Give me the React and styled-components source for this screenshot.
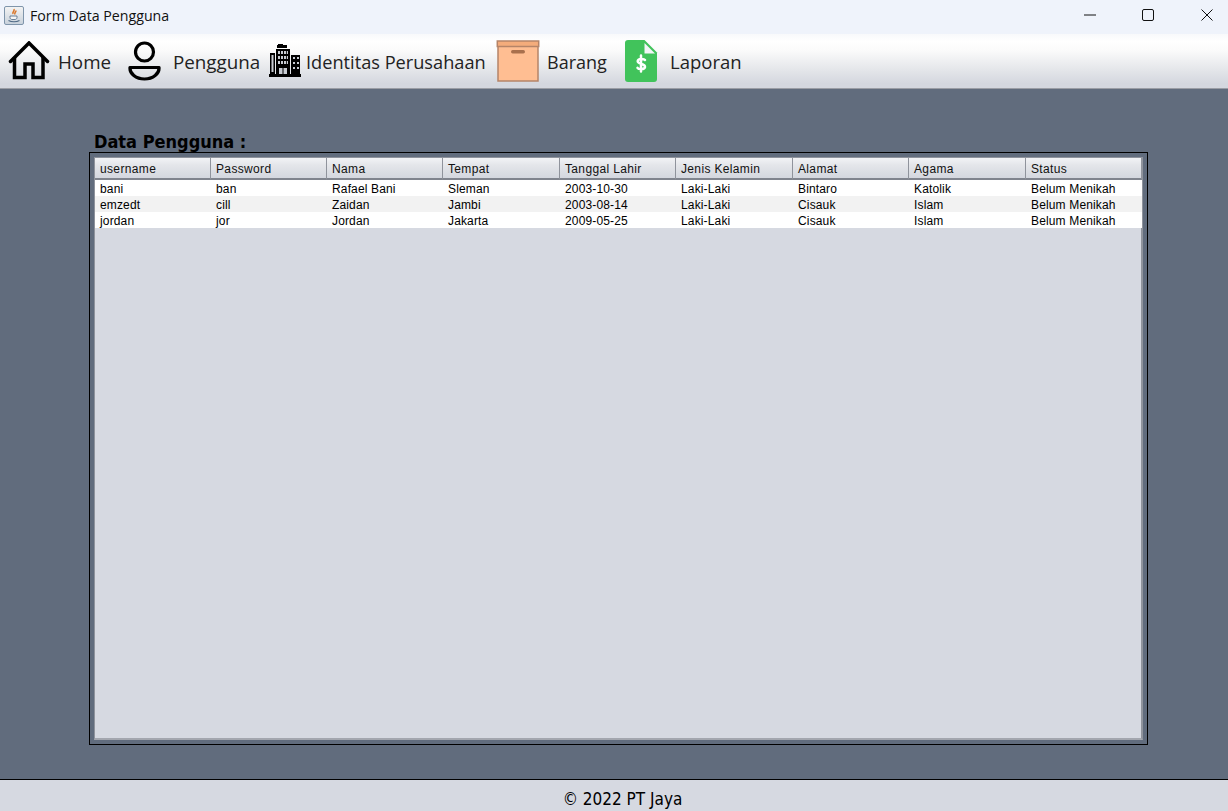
import React from 'react';
import styled, { createGlobalStyle } from 'styled-components';

const GlobalStyle = createGlobalStyle`
  html, body {
    margin: 0;
    padding: 0;
    height: 100%;
    overflow: hidden;
  }
  #root {
    height: 100%;
  }
`;

/*
 * styled components
 */

const Window = styled.div`
  display: flex;
  flex-direction: column;
  height: 811px;
  overflow: hidden;
  width: 1228px;
  background: #616c7d;
`;

const TitleBar = styled.div`
  align-items: center;
  background: #eff3fb;
  display: flex;
  flex: 0 0 34px;
  padding-left: 4px;
`;

const AppIcon = styled.div`
  align-items: center;
  background: linear-gradient(#f3f3f3, #c9d2dc);
  border: 1px solid #7f95ab;
  border-radius: 2px;
  box-sizing: border-box;
  display: flex;
  height: 19px;
  justify-content: center;
  margin-top: -4px;
  width: 20px;
`;

const WindowTitle = styled.span`
  color: #111;
  font-family: "Open Sans", "Noto Sans", sans-serif;
  font-size: 14.2px;
  margin-left: 6px;
  margin-top: -3px;
`;

const WindowButtons = styled.div`
  align-self: flex-start;
  display: flex;
  margin-left: auto;
  margin-right: -8px;
`;

const WindowButton = styled.div`
  align-items: center;
  display: flex;
  height: 30px;
  justify-content: center;
  width: 58.500px;
`;

const Toolbar = styled.div`
  align-items: center;
  background: linear-gradient(#f8f9fb 0, #ffffff 14%, #fbfbfb 30%, #e3e5e9 68%, #d4d7df 92%);
  border-bottom: 1px solid #9a9da5;
  box-sizing: border-box;
  display: flex;
  flex: 0 0 55px;
  height: 55px;
  padding-left: 8px;
`;

const ToolItem = styled.div`
  align-items: center;
  display: flex;
  flex: 0 0 ${props => props.$width}px;
`;

const ToolLabel = styled.span`
  color: #222;
  font-family: "Open Sans", "Noto Sans", sans-serif;
  font-size: ${props => props.$size}px;
  line-height: 26px;
  margin-left: ${props => props.$gap}px;
  margin-top: 2px;
  white-space: nowrap;
`;

const Content = styled.div`
  display: flex;
  flex: 1 1 auto;
  flex-direction: column;
  min-height: 0;
  padding: 41px 80px 0 89px;
`;

const Heading = styled.h2`
  color: #000;
  font-family: "DejaVu Sans Condensed", "DejaVu Sans", sans-serif;
  font-size: 18px;
  font-weight: bold;
  height: 22px;
  line-height: 23px;
  margin: 0 0 0 5px;
`;

const ScrollFrame = styled.div`
  border: 1px solid #000;
  box-sizing: border-box;
  height: 593px;
  padding: 4px;
  width: 1059px;
`;

const ScrollInner = styled.div`
  background: #d6d9e1;
  border-bottom: 2px solid #a3a6ae;
  border-left: 1px solid #8f939c;
  border-right: 2px solid #8f939c;
  border-top: 1px solid #8f939c;
  box-sizing: border-box;
  height: 100%;
`;

const Grid = styled.div`
  display: grid;
  grid-template-columns: 116px 116px 116px 117px 116px 117px 116px 117px 116px;
`;

const HeaderCell = styled.div`
  background: linear-gradient(#f2f3f6 0, #e4e6ea 35%, #d4d7df 100%);
  border-bottom: 2px solid #80848e;
  border-right: 1px solid #8f939c;
  box-sizing: border-box;
  color: #111;
  font-family: "Liberation Sans", Arial, sans-serif;
  font-size: 12px;
  height: 22px;
  letter-spacing: 0.350px;
  line-height: 22px;
  padding-left: 5px;
`;

const Cell = styled.div`
  background: ${props => (props.$odd ? '#f2f2f2' : '#ffffff')};
  color: #000;
  font-family: "Liberation Sans", Arial, sans-serif;
  font-size: 12px;
  height: 16px;
  letter-spacing: 0.150px;
  line-height: 19px;
  padding-left: 5px;
  white-space: nowrap;
`;

const Footer = styled.footer`
  background: #d6d9e1;
  border-top: 1px solid #000;
  box-sizing: border-box;
  color: #000;
  flex: 0 0 32px;
  font-family: "DejaVu Sans Condensed", "DejaVu Sans", sans-serif;
  font-size: 17px;
  height: 32px;
  line-height: 38px;
  min-height: 0;
  overflow: hidden;
  padding-left: 17px;
  text-align: center;
`;

const COLUMNS = ['username', 'Password', 'Nama', 'Tempat', 'Tanggal Lahir', 'Jenis Kelamin', 'Alamat', 'Agama', 'Status'];

const ROWS = [
  ['bani', 'ban', 'Rafael Bani', 'Sleman', '2003-10-30', 'Laki-Laki', 'Bintaro', 'Katolik', 'Belum Menikah'],
  ['emzedt', 'cill', 'Zaidan', 'Jambi', '2003-08-14', 'Laki-Laki', 'Cisauk', 'Islam', 'Belum Menikah'],
  ['jordan', 'jor', 'Jordan', 'Jakarta', '2009-05-25', 'Laki-Laki', 'Cisauk', 'Islam', 'Belum Menikah'],
];

const JavaIcon = () => (
  <svg width="14" height="15" viewBox="0 0 14 15" fill="none">
    <path d="M7 1c1 2-2 3-1 5M9 2.500c0 2-2 2-1 4" stroke="#d9772b" strokeWidth="1.500" />
    <path d="M3 8h7v1.500c0 1.200-1 2-2 2H5c-1 0-2-.8-2-2z" fill="#f5f5f5" stroke="#5d7690" strokeWidth="0.900" />
    <path d="M1.500 12.500c3 1.500 8 1.500 11 0" stroke="#4f6a86" strokeWidth="1.200" />
  </svg>
);

const HomeIcon = () => (
  <svg width="42" height="40" viewBox="0 0 42 40" fill="none" stroke="#000" strokeWidth="3.500">
    <path d="M2.500 20.500 21 2 39.500 20.500" strokeLinecap="round" strokeLinejoin="miter" />
    <path d="M6.500 16v20.500h10.500V23h8v13.500h10V16" strokeLinejoin="miter" />
  </svg>
);

const UserIcon = () => (
  <svg width="34" height="40" viewBox="0 0 34 40" fill="none" stroke="#000" strokeWidth="3.200">
    <circle cx="17.500" cy="11" r="9" />
    <path d="M3 26.500h29c.6 6-6 11.500-14.500 11.500S2.400 32.500 3 26.500z" strokeLinejoin="round" />
  </svg>
);

const BuildingIcon = () => (
  <svg width="32" height="34" viewBox="0 0 32 34">
    <path fill="#000" d="M9 0h5v1h4v3H8V1h1zM7 5h14v25H7zM1 9h5v21H1zM22 11h9v19h-9zM0 30h32v3H0z" />
    <g fill="#c9ccd3">
      <rect x="2.500" y="11" width="2" height="17" />
      <rect x="9" y="7" width="10" height="3" />
      <rect x="9" y="12" width="10" height="3" />
      <rect x="9" y="17" width="10" height="3" />
      <rect x="10" y="24" width="8" height="6" />
      <rect x="24" y="13" width="2" height="2" />
      <rect x="28" y="13" width="2" height="2" />
      <rect x="24" y="18" width="2" height="2" />
      <rect x="28" y="18" width="2" height="2" />
      <rect x="24" y="23" width="2" height="2" />
      <rect x="28" y="23" width="2" height="2" />
    </g>
    <path fill="#000" d="M11 7h1v13h-1zM14 7h1v13h-1zM17 7h.800v13H17zM13.500 24h1v6h-1z" />
  </svg>
);

const BoxIcon = () => (
  <svg width="44" height="42" viewBox="0 0 44 42">
    <rect x="2" y="5" width="40" height="36" fill="#ffbe92" stroke="#b58468" strokeWidth="1.500" />
    <rect x="1.300" y="1" width="41.400" height="5.500" fill="#f4ac7b" stroke="#b58468" strokeWidth="1.500" />
    <rect x="15" y="10" width="14" height="3.500" rx="1.700" fill="#a9704d" />
  </svg>
);

const FileIcon = () => (
  <svg width="33" height="42" viewBox="0 0 33 42">
    <path d="M3 0h16.500L32 12.500V39a3 3 0 0 1-3 3H3a3 3 0 0 1-3-3V3a3 3 0 0 1 3-3z" fill="#41c35b" />
    <path d="M19.500 3 30 13.500H19.500z" fill="#f3f5f7" />
    <path d="M20 20c-1-1.500-7-1.800-7.300 1.200-.3 3.300 7.800 2.300 7.300 5.800-.4 2.800-6.500 2.500-7.500.8M16 15.500v16" fill="none" stroke="#fff" strokeWidth="2.500" strokeLinecap="round" />
  </svg>
);

const App = () => (
  <Window>
    <GlobalStyle />
    <TitleBar>
      <AppIcon>
        <JavaIcon />
      </AppIcon>
      <WindowTitle>Form Data Pengguna</WindowTitle>
      <WindowButtons>
        <WindowButton>
          <svg width="12" height="12" viewBox="0 0 12 12"><path d="M0 6h12" stroke="#111" strokeWidth="1" /></svg>
        </WindowButton>
        <WindowButton>
          <svg width="12" height="12" viewBox="0 0 12 12"><rect x="0.500" y="0.500" width="11" height="11" rx="1.500" fill="none" stroke="#111" /></svg>
        </WindowButton>
        <WindowButton>
          <svg width="12" height="12" viewBox="0 0 12 12"><path d="M0.500 0.500l11 11M11.500 0.500l-11 11" stroke="#111" strokeWidth="1" /></svg>
        </WindowButton>
      </WindowButtons>
    </TitleBar>
    <Toolbar>
      <ToolItem $width={119}>
        <HomeIcon />
        <ToolLabel $gap={8} $size={18.8}>Home</ToolLabel>
      </ToolItem>
      <ToolItem $width={142}>
        <UserIcon />
        <ToolLabel $gap={12} $size={18.8}>Pengguna</ToolLabel>
      </ToolItem>
      <ToolItem $width={227}>
        <BuildingIcon />
        <ToolLabel $gap={5} $size={18.2}>Identitas Perusahaan</ToolLabel>
      </ToolItem>
      <ToolItem $width={129}>
        <BoxIcon />
        <ToolLabel $gap={7} $size={18}>Barang</ToolLabel>
      </ToolItem>
      <ToolItem $width={120}>
        <FileIcon />
        <ToolLabel $gap={12} $size={18.5}>Laporan</ToolLabel>
      </ToolItem>
    </Toolbar>
    <Content>
      <Heading>Data Pengguna :</Heading>
      <ScrollFrame>
        <ScrollInner>
          <Grid>
            {COLUMNS.map(name => <HeaderCell key={name}>{name}</HeaderCell>)}
            {ROWS.map((row, r) => row.map((value, c) => (
              <Cell key={`${r}-${c}`} $odd={r % 2 === 1}>{value}</Cell>
            )))}
          </Grid>
        </ScrollInner>
      </ScrollFrame>
    </Content>
    <Footer>© 2022 PT Jaya</Footer>
  </Window>
);

export default App;
